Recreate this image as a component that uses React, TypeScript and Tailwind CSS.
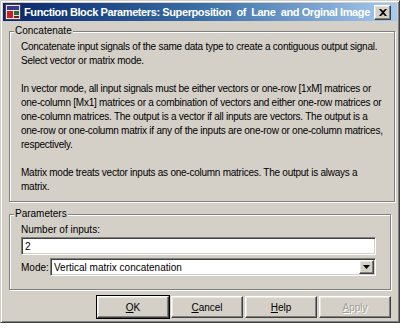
import React from 'react';

const raised =
  'border border-t-white border-l-white border-b-[#404040] border-r-[#404040] shadow-[inset_-1px_-1px_0_#808080,inset_1px_1px_0_#e8e6e1]';
const sunken =
  'border border-t-[#808080] border-l-[#808080] border-b-white border-r-white shadow-[inset_1px_1px_0_#404040,inset_-1px_-1px_0_#d4d0c8]';

const BlockIcon: React.FC = () => (
  <svg width="16" height="16" viewBox="0 0 16 16" className="shrink-0">
    <rect x="0.5" y="0.5" width="15" height="15" fill="#e8e4dc" stroke="#404060" />
    <rect x="2" y="2" width="12" height="4" fill="#3a3a8a" />
    <path d="M2 7 h6 v7 h-6 z" fill="#c8202a" />
    <path d="M9 7 h5 v4 h-5 z" fill="#2a6a3a" />
    <path d="M9 12 h5 v2 h-5 z" fill="#7a1a1a" />
  </svg>
);

const Group: React.FC<{ label: string; className?: string; children: React.ReactNode }> = ({ label, className, children }) => (
  <fieldset
    className={`border border-[#808080] shadow-[1px_1px_0_#fff,inset_1px_1px_0_#fff] mx-[6px] px-[11px] ${className ?? ''}`}
  >
    <legend className="-ml-[7px] px-[1px] bg-[#d4d0c8] leading-[14px]">{label}</legend>
    {children}
  </fieldset>
);

const Button: React.FC<{ label: string; mnemonic: string; rest: string; disabled?: boolean; isDefault?: boolean }> = ({
  label,
  mnemonic,
  rest,
  disabled,
  isDefault,
}) => (
  <div className={`w-[72px] h-[22px] ${isDefault ? 'outline outline-1 outline-black' : ''}`}>
    <button
      className={`w-full h-full bg-[#d4d0c8] flex items-center justify-center ${raised} ${
        disabled ? 'text-[#a09d96] text-shadow-[1px_1px_0_#fff]' : 'text-black'
      }`}
      aria-label={label}
    >
      <span className="underline underline-offset-[1px]">{mnemonic}</span>
      {rest}
    </button>
  </div>
);

const concatLines = [
  ['Concatenate input signals of the same data type to create a contiguous output signal.', 'Select vector or matrix mode.'],
  [
    'In vector mode, all input signals must be either vectors or one-row [1xM] matrices or',
    'one-column [Mx1] matrices or a combination of vectors and either one-row matrices or',
    'one-column matrices. The output is a vector if all inputs are vectors. The output is a',
    'one-row or one-column matrix if any of the inputs are one-row or one-column matrices,',
    'respectively.',
  ],
  ['Matrix mode treats vector inputs as one-column matrices. The output is always a', 'matrix.'],
];

export default function App() {
  return (
    <div className="w-[405px] h-[329px] bg-white font-['Liberation_Sans',Arial,sans-serif] text-[10px] text-black">
      <div className="w-[400px] h-[323px] bg-[#d4d0c8] border border-t-[#d4d0c8] border-l-[#d4d0c8] border-b-[#404040] border-r-[#404040] shadow-[inset_1px_1px_0_#fff,inset_-1px_-1px_0_#808080] p-[2px] flex flex-col">
        {/* title bar */}
        <div className="h-[18px] bg-gradient-to-r from-[#0a246a] via-[#3a6ea5] to-[#a6caf0] flex items-center pl-[2px] pr-[6px] gap-[3px]">
          <BlockIcon />
          <span className="flex-1 min-w-0 overflow-hidden text-white font-bold text-[11px] whitespace-pre tracking-[-0.4px]">
            Function Block Parameters: Superposition  of  Lane  and Orginal Image
          </span>
          <div className={`shrink-0 w-[17px] h-[15px] bg-[#d4d0c8] flex items-center justify-center ${raised}`}>
            <svg width="8" height="7" viewBox="0 0 8 7">
              <path d="M0 0h2l2 2 2-2h2L5 3.5 8 7H6L4 5 2 7H0l3-3.5z" fill="#000" />
            </svg>
          </div>
        </div>

        {/* concatenate */}
        <Group label="Concatenate" className="mt-[3px] pb-[7px]">
          <div className="pt-[2px] flex flex-col gap-[14px] leading-[14px] whitespace-nowrap tracking-[-0.25px]">
            {concatLines.map((para, i) => (
              <div key={i}>
                {para.map((l) => (
                  <div key={l}>{l}</div>
                ))}
              </div>
            ))}
          </div>
        </Group>

        {/* parameters */}
        <Group label="Parameters" className="mt-[5px] pb-[13px]">
          <div className="leading-[14px] pt-[2px]">Number of inputs:</div>
          <div className={`h-[18px] bg-white flex items-center px-[3px] mr-[3px] ${sunken}`}>2</div>
          <div className="flex items-center mt-[3px] mr-[3px]">
            <span className="w-[29px]">Mode:</span>
            <div className={`flex-1 h-[18px] bg-white flex items-center pl-[3px] pr-[1px] ${sunken}`}>
              <span className="flex-1">Vertical matrix concatenation</span>
              <div className={`w-[15px] h-[14px] bg-[#d4d0c8] flex items-center justify-center ${raised}`}>
                <svg width="7" height="4" viewBox="0 0 7 4">
                  <path d="M0 0h7L3.5 4z" fill="#000" />
                </svg>
              </div>
            </div>
          </div>
        </Group>

        {/* buttons */}
        <div className="flex justify-end gap-[2px] mt-[6px] mr-[6px]">
          <Button label="OK" mnemonic="O" rest="K" isDefault />
          <Button label="Cancel" mnemonic="C" rest="ancel" />
          <Button label="Help" mnemonic="H" rest="elp" />
          <Button label="Apply" mnemonic="A" rest="pply" disabled />
        </div>
      </div>
    </div>
  );
}
